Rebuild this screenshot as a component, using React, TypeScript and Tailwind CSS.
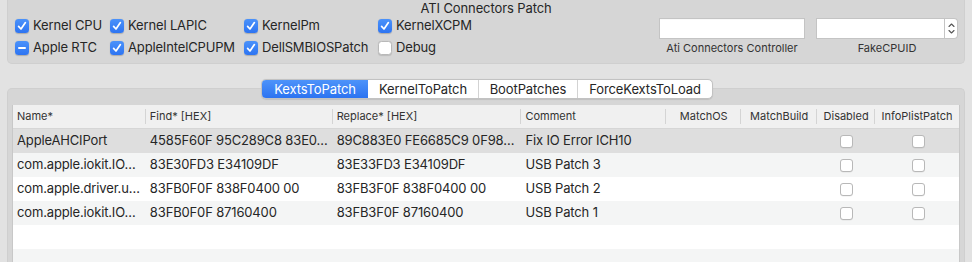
import React from "react";

type CBState = "on" | "off" | "mixed";

function MacCheck({ state }: { state: CBState }) {
  if (state === "off") {
    return (
      <span className="inline-block w-[14px] h-[14px] rounded-[3.5px] bg-white border border-[#b9b9b9] shadow-[0_0.5px_1px_rgba(0,0,0,0.12)] shrink-0" />
    );
  }
  return (
    <span className="inline-flex items-center justify-center w-[14px] h-[14px] rounded-[3.5px] bg-gradient-to-b from-[#4b92fa] to-[#2d74f2] shadow-[0_0.5px_1px_rgba(0,0,0,0.2)] shrink-0">
      {state === "on" ? (
        <svg width="14" height="14" viewBox="0 0 14 14">
          <path d="M3.6 7.4 L6 10 L10.4 3.6" fill="none" stroke="white" strokeWidth="1.7" strokeLinecap="round" strokeLinejoin="round" />
        </svg>
      ) : (
        <span className="block w-[8px] h-[2px] rounded-[1px] bg-white" />
      )}
    </span>
  );
}

function CB({ state, label, w }: { state: CBState; label: string; w: string }) {
  return (
    <div className={`flex items-center h-[22px] ${w}`}>
      <MacCheck state={state} />
      <span className="ml-[4px] text-[13px] tracking-[-0.15px] text-[#262626] whitespace-nowrap">{label}</span>
    </div>
  );
}

function SmallBox() {
  return <span className="inline-block w-[13px] h-[13px] rounded-[3px] bg-white border border-[#b8b8b8] shadow-[0_0.5px_0.5px_rgba(0,0,0,0.08)]" />;
}

const cols = [
  { name: "Name*", w: "w-[133px]", align: "left" },
  { name: "Find* [HEX]", w: "w-[187px]", align: "left" },
  { name: "Replace* [HEX]", w: "w-[189px]", align: "left" },
  { name: "Comment", w: "w-[145px]", align: "left" },
  { name: "MatchOS", w: "w-[75px]", align: "center" },
  { name: "MatchBuild", w: "w-[76px]", align: "center" },
  { name: "Disabled", w: "w-[58px]", align: "center" },
  { name: "InfoPlistPatch", w: "w-[84px]", align: "center" },
];

const rows: (string[] | null)[] = [
  ["AppleAHCIPort", "4585F60F 95C289C8 83E0…", "89C883E0 FE6685C9 0F98…", "Fix IO Error ICH10"],
  ["com.apple.iokit.IO…", "83E30FD3 E34109DF", "83E33FD3 E34109DF", "USB Patch 3"],
  ["com.apple.driver.u…", "83FB0F0F 838F0400 00", "83FB3F0F 838F0400 00", "USB Patch 2"],
  ["com.apple.iokit.IO…", "83FB0F0F 87160400", "83FB3F0F 87160400", "USB Patch 1"],
  null,
  null,
];

const rowBg = ["bg-[#dedede]", "bg-[#f4f5f5]", "bg-white", "bg-[#f4f5f5]", "bg-white", "bg-[#f4f5f5]"];

const tabs = [
  { name: "KextsToPatch", w: "w-[106px]", active: true },
  { name: "KernelToPatch", w: "w-[110px]", active: false },
  { name: "BootPatches", w: "w-[99px]", active: false },
  { name: "ForceKextsToLoad", w: "w-[135px]", active: false },
];

export default function App() {
  return (
    <div className="w-[972px] h-[262px] overflow-hidden bg-[#e2e2e2] font-['Inter','Liberation_Sans',sans-serif] text-[#262626] antialiased">
      {/* top panel */}
      <div className="mx-[7px] h-[64px] bg-[#d6d6d6] rounded-b-[5px] border-x border-b border-[#cfcfcf]">
        <div className="h-[15px] text-center text-[13px] leading-[15px] tracking-[-0.1px] text-[#262626] pt-px">ATI Connectors Patch</div>
        <div className="flex">
          <div className="pl-[7px] flex flex-col">
            <div className="flex">
              <CB state="on" label="Kernel CPU" w="w-[95px]" />
              <CB state="on" label="Kernel LAPIC" w="w-[134px]" />
              <CB state="on" label="KernelPm" w="w-[134px]" />
              <CB state="on" label="KernelXCPM" w="w-[120px]" />
            </div>
            <div className="flex">
              <CB state="mixed" label="Apple RTC" w="w-[95px]" />
              <CB state="on" label="AppleIntelCPUPM" w="w-[134px]" />
              <CB state="on" label="DellSMBIOSPatch" w="w-[134px]" />
              <CB state="off" label="Debug" w="w-[120px]" />
            </div>
          </div>
          <div className="ml-auto mr-[6px] flex gap-[11px] pt-[3px]">
            <div className="flex flex-col items-center">
              <div className="w-[146px] h-[21px] bg-white border border-[#c4c4c4] shadow-[inset_0_0.5px_0_rgba(0,0,0,0.05)]" />
              <div className="mt-[2px] text-[11px] leading-[14px] text-[#333]">Ati Connectors Controller</div>
            </div>
            <div className="flex flex-col items-center">
              <div className="flex w-[142px] h-[21px]">
                <div className="flex-1 bg-white border border-[#c4c4c4]" />
                <div className="w-[13px] h-[21px] bg-white border-y border-r border-[#c4c4c4] rounded-r-[4px] flex items-center justify-center">
                  <svg width="9" height="15" viewBox="0 0 9 15">
                    <path d="M2 5.5 L4.5 3 L7 5.5" fill="none" stroke="#555" strokeWidth="1.1" strokeLinecap="round" strokeLinejoin="round" />
                    <path d="M2 9.5 L4.5 12 L7 9.5" fill="none" stroke="#555" strokeWidth="1.1" strokeLinecap="round" strokeLinejoin="round" />
                  </svg>
                </div>
              </div>
              <div className="mt-[2px] text-[11px] leading-[14px] text-[#333]">FakeCPUID</div>
            </div>
          </div>
        </div>
      </div>

      {/* tabs */}
      <div className="relative z-10 mt-[15px] flex justify-center pl-[2px]">
        <div className="flex h-[20px] rounded-[5px] bg-white border border-[#c2c2c2] shadow-[0_0.5px_1px_rgba(0,0,0,0.1)] overflow-hidden">
          {tabs.map((t, i) => (
            <div
              key={t.name}
              className={`${t.w} flex items-center justify-center text-[13px] leading-[16px] tracking-[-0.1px] ${
                t.active
                  ? "bg-gradient-to-b from-[#4d93fa] to-[#2c73f1] text-white"
                  : "text-[#262626]"
              } ${i > 0 && !tabs[i - 1].active ? "border-l border-[#d3d3d3]" : ""}`}
            >
              {t.name}
            </div>
          ))}
        </div>
      </div>

      {/* bottom panel */}
      <div className="-mt-[11px] mx-[7px] h-[200px] bg-[#d6d6d6] rounded-t-[5px] border-x border-t border-[#cfcfcf] pt-[16px] pl-[4px] pr-[4px]">
        <div className="border-x border-[#c8c8c8] bg-white h-full">
          {/* header */}
          <div className="flex h-[24px] bg-[#f0f0f0] border-b border-[#d6d6d6]">
            {cols.map((c, i) => (
              <div
                key={c.name}
                className={`${c.w} relative flex items-center text-[11px] text-[#333] whitespace-nowrap ${
                  c.align === "center" ? "justify-center" : "pl-[4px]"
                }`}
              >
                {c.name}
                {i < cols.length - 1 && (
                  <span className="absolute right-0 top-[4px] h-[15px] w-px bg-[#d4d4d4]" />
                )}
              </div>
            ))}
          </div>
          {rows.map((r, ri) => (
            <div key={ri} className={`flex h-[24px] items-center ${rowBg[ri]}`}>
              {r ? (
                <>
                  {r.map((cell, ci) => (
                    <div key={ci} className={`${cols[ci].w} pl-[4px] text-[13px] tracking-[-0.15px] whitespace-nowrap overflow-hidden`}>
                      {cell}
                    </div>
                  ))}
                  <div className="w-[75px]" />
                  <div className="w-[76px]" />
                  <div className="w-[58px] flex justify-center pl-[1px]">
                    <SmallBox />
                  </div>
                  <div className="w-[84px] flex justify-center pl-[2px]">
                    <SmallBox />
                  </div>
                </>
              ) : null}
            </div>
          ))}
        </div>
      </div>
    </div>
  );
}
